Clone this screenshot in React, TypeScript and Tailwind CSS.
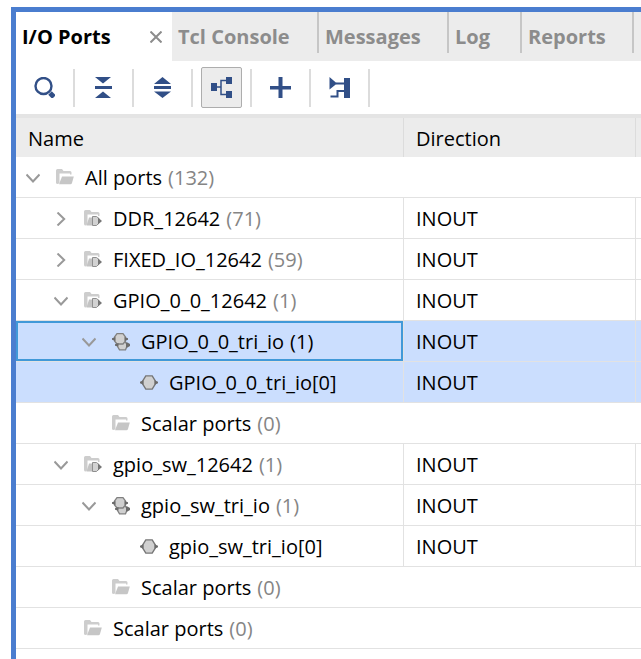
import { useState } from 'react';

type IconKind = 'folder' | 'group' | 'bus' | 'port';

interface PortRow {
  level: number;
  name: string;
  icon: IconKind;
  open?: boolean;
  count?: number;
  direction?: string;
  selected?: boolean;
  focused?: boolean;
}

const rows: PortRow[] = [
  { level: 0, name: 'All ports', icon: 'folder', open: true, count: 132 },
  { level: 1, name: 'DDR_12642', icon: 'group', open: false, count: 71, direction: 'INOUT' },
  { level: 1, name: 'FIXED_IO_12642', icon: 'group', open: false, count: 59, direction: 'INOUT' },
  { level: 1, name: 'GPIO_0_0_12642', icon: 'group', open: true, count: 1, direction: 'INOUT' },
  { level: 2, name: 'GPIO_0_0_tri_io', icon: 'bus', open: true, count: 1, direction: 'INOUT', selected: true, focused: true },
  { level: 3, name: 'GPIO_0_0_tri_io[0]', icon: 'port', direction: 'INOUT', selected: true },
  { level: 2, name: 'Scalar ports', icon: 'folder', count: 0 },
  { level: 1, name: 'gpio_sw_12642', icon: 'group', open: true, count: 1, direction: 'INOUT' },
  { level: 2, name: 'gpio_sw_tri_io', icon: 'bus', open: true, count: 1, direction: 'INOUT' },
  { level: 3, name: 'gpio_sw_tri_io[0]', icon: 'port', direction: 'INOUT' },
  { level: 2, name: 'Scalar ports', icon: 'folder', count: 0 },
  { level: 1, name: 'Scalar ports', icon: 'folder', count: 0 },
];

const indents = ['pl-[10px]', 'pl-[38px]', 'pl-[66px]', 'pl-[94px]'];

function RowIcon({ kind }: { kind: IconKind }) {
  return (
    <svg width="18" height="18" viewBox="0 0 18 18" className="shrink-0" aria-hidden="true">
      {kind === 'folder' && (
        <>
          <path d="M0 14V1.500Q0 0 1.500 0H6l1.500 2H14q1.500 0 1.500 1.500V5.500H14V4.500H3.500V14L2 15Q0 15 0 14Z" fill="#cdcdcd" />
          <path d="M6 7.500H17.800L16 14Q15.500 15.200 14.500 15.200H3Z" fill="#c6c6c6" />
        </>
      )}
      {kind === 'group' && (
        <>
          <path d="M0 14V1.500Q0 0 1.500 0H6l1.500 2H14q1.500 0 1.500 1.500V6H14V4.500H3.500V14L2 15.500Q0 15.500 0 14Z" fill="#cdcdcd" />
          <path d="M5 7.500H8V15.500H2.500Z" fill="#c4c4c4" />
          <path d="M8.500 6.500H12.500L15.500 9V12.500L12.500 15.500H8.500Z" fill="#d2d2d2" stroke="#8f8f8f" />
          <path d="M14 7.500L18 11L14 14.500Z" fill="#777777" />
        </>
      )}
      {kind === 'bus' && (
        <>
          <path d="M7 8.500H13L15.500 12L13.500 16.800H7.500L4.700 12Z" fill="#d0d0d0" stroke="#808080" strokeWidth="1.300" />
          <path d="M14 9.500H15.500L18 11V13L15.500 14.500H14Z" fill="#6b6b6b" />
          <path d="M5 0.700H11L13.500 4V8L11 11H5L2.500 8V4Z" fill="#d0d0d0" stroke="#808080" strokeWidth="1.300" />
          <path d="M3.500 4L0 5.200V6.800L3.500 8ZM12.500 4L16 5.200V6.800L12.500 8ZM6.500 10L3 11.200V12.800L6.500 13.500Z" fill="#6b6b6b" />
        </>
      )}
      {kind === 'port' && (
        <>
          <path d="M5.800 1.900H12.200L15.300 7V10L12.200 15.100H5.800L2.700 10V7Z" fill="#d0d0d0" stroke="#757575" strokeWidth="1.400" />
          <path d="M3.500 6.300L0 7.700V9.300L3.500 10.700ZM14.500 6.300L18 7.700V9.300L14.500 10.700Z" fill="#6b6b6b" />
        </>
      )}
    </svg>
  );
}

function Twisty({ open, label, onToggle }: { open?: boolean; label: string; onToggle: () => void }) {
  if (open === undefined) return <span className="w-[14px] shrink-0" />;
  return (
    <button type="button" aria-label={label} aria-expanded={open} onClick={onToggle} className="w-[14px] shrink-0">
      <svg width="14" height="14" viewBox="0 0 14 14" fill="none" stroke="#999999" strokeWidth="2" className="block">
        {open ? <path d="M0.500 3.500L7 10.500L13.500 3.500" /> : <path d="M3.500 0.500L10.200 7L3.500 13.500" />}
      </svg>
    </button>
  );
}

const tools = [
  {
    label: 'Search',
    art: (
      <>
        <circle cx="9.500" cy="9" r="8" fill="none" stroke="#314f87" strokeWidth="2.400" />
        <path d="M16 16L20 20" stroke="#314f87" strokeWidth="5" />
      </>
    ),
  },
  {
    label: 'Collapse All',
    art: <path d="M2 0H18L10 6.500ZM2 9H19V12H2ZM2 21L10 14.500L18 21Z" fill="#314f87" />,
  },
  {
    label: 'Expand All',
    art: <path d="M2 7L10.500 0L19 7ZM2 9H19V12H2ZM2 14.500H19L10.500 21Z" fill="#314f87" />,
  },
  {
    label: 'Group by Interface',
    active: true,
    art: (
      <>
        <path d="M0 6H6V14H0ZM15 0H21V7H15ZM15 14H21V21H15Z" fill="#314f87" />
        <path d="M6 10H10M15 3.500H10V17.500H15" fill="none" stroke="#314f87" strokeWidth="1.500" />
      </>
    ),
  },
  {
    label: 'Create I/O Ports',
    art: <path d="M0 9H8.500V0H12.500V9H21V12.500H12.500V21H8.500V12.500H0Z" fill="#314f87" />,
  },
  {
    label: 'Schematic',
    art: (
      <>
        <path d="M0.500 0L8 6.500L0.500 12.500ZM15 1H21V21H15Z" fill="#314f87" />
        <path d="M7 6.500H15M15 14H8.500V19.500H1.500" fill="none" stroke="#314f87" strokeWidth="2" />
      </>
    ),
  },
];

const tabs = [
  { label: 'Tcl Console', width: 'w-[147px]' },
  { label: 'Messages', width: 'w-[130px]' },
  { label: 'Log', width: 'w-[73px]' },
  { label: 'Reports', width: 'w-[112px]' },
];

export default function App() {
  const [ports, setPorts] = useState(rows);
  const toggle = (index: number) =>
    setPorts(ports.map((p, i) => (i === index ? { ...p, open: !p.open } : p)));

  return (
    <div className="flex min-h-screen flex-col bg-white pt-[7px] pl-[11px] font-['Open_Sans','Noto_Sans',sans-serif] text-xl text-black">
      <main className="flex-1 overflow-hidden border-t-5 border-l-5 border-[#4a7dcf]">
        <nav className="flex h-[49px] bg-[#ececec] font-bold">
          <div className="flex w-[156px] shrink-0 items-center justify-between bg-white pr-[10px] pl-[6px]">
            <button type="button">I/O Ports</button>
            <button type="button" aria-label="Close I/O Ports">
              <svg width="12" height="12" viewBox="0 0 12 12" stroke="#8c8c8c" strokeWidth="2" className="block">
                <path d="M0.500 0.500L11.500 11.500M11.500 0.500L0.500 11.500" />
              </svg>
            </button>
          </div>
          {tabs.map((tab) => (
            <button
              key={tab.label}
              type="button"
              className={`h-[41px] shrink-0 border-r-2 border-[#c6c6c6] pt-2 pl-[6px] text-left text-[#8c8c8c] ${tab.width}`}
            >
              {tab.label}
            </button>
          ))}
        </nav>

        <div role="toolbar" className="flex h-[53px] items-center">
          {tools.map((tool) => (
            <div key={tool.label} className="flex h-[38px] w-[59px] items-center justify-center border-r-2 border-[#dcdcdc]">
              <button
                type="button"
                aria-label={tool.label}
                aria-pressed={tool.active}
                className={`flex size-[41px] shrink-0 items-center justify-center rounded-xs border ${
                  tool.active ? 'border-[#adadad] bg-[#ececec]' : 'border-transparent'
                }`}
              >
                <svg width="21" height="21" viewBox="0 0 21 21">
                  {tool.art}
                </svg>
              </button>
            </div>
          ))}
        </div>

        <table className="w-full table-fixed border-separate border-spacing-0 border-t-4 border-[#e4e4e4] text-left">
          <colgroup>
            <col className="w-[388px]" />
            <col className="w-[232px]" />
            <col />
          </colgroup>
          <thead>
            <tr className="h-[39px] bg-[#ececec]">
              <th className="border-r border-[#dcdcdc] p-0 pt-0.5 pl-3 font-normal">Name</th>
              <th className="border-r border-[#dcdcdc] p-0 pt-0.5 pl-3 font-normal">Direction</th>
              <th className="p-0" />
            </tr>
          </thead>
          <tbody>
            {ports.map((row, index) => {
              const edge = row.direction ? 'border-r' : '';
              return (
                <tr key={index} className={row.selected ? 'bg-[#cbdefe]' : ''}>
                  <td className={`border-b border-[#e2e2e2] p-0 ${edge}`}>
                    <div
                      className={`flex h-10 items-center pt-0.5 whitespace-nowrap ${indents[row.level]} ${
                        row.focused ? 'inset-ring-2 inset-ring-[#4199d8]' : ''
                      }`}
                    >
                      <Twisty open={row.open} label={`Toggle ${row.name}`} onToggle={() => toggle(index)} />
                      <span className="mr-[11px] ml-4 flex">
                        <RowIcon kind={row.icon} />
                      </span>
                      <span>{row.name}</span>
                      {row.count !== undefined && (
                        <span className={`ml-[6px] ${row.selected ? '' : 'text-[#858585]'}`}>({row.count})</span>
                      )}
                    </div>
                  </td>
                  <td className={`border-b border-[#e2e2e2] p-0 pt-0.5 pl-3 ${edge}`}>{row.direction}</td>
                  <td className="border-b border-[#e2e2e2] p-0" />
                </tr>
              );
            })}
          </tbody>
        </table>
      </main>
    </div>
  );
}
